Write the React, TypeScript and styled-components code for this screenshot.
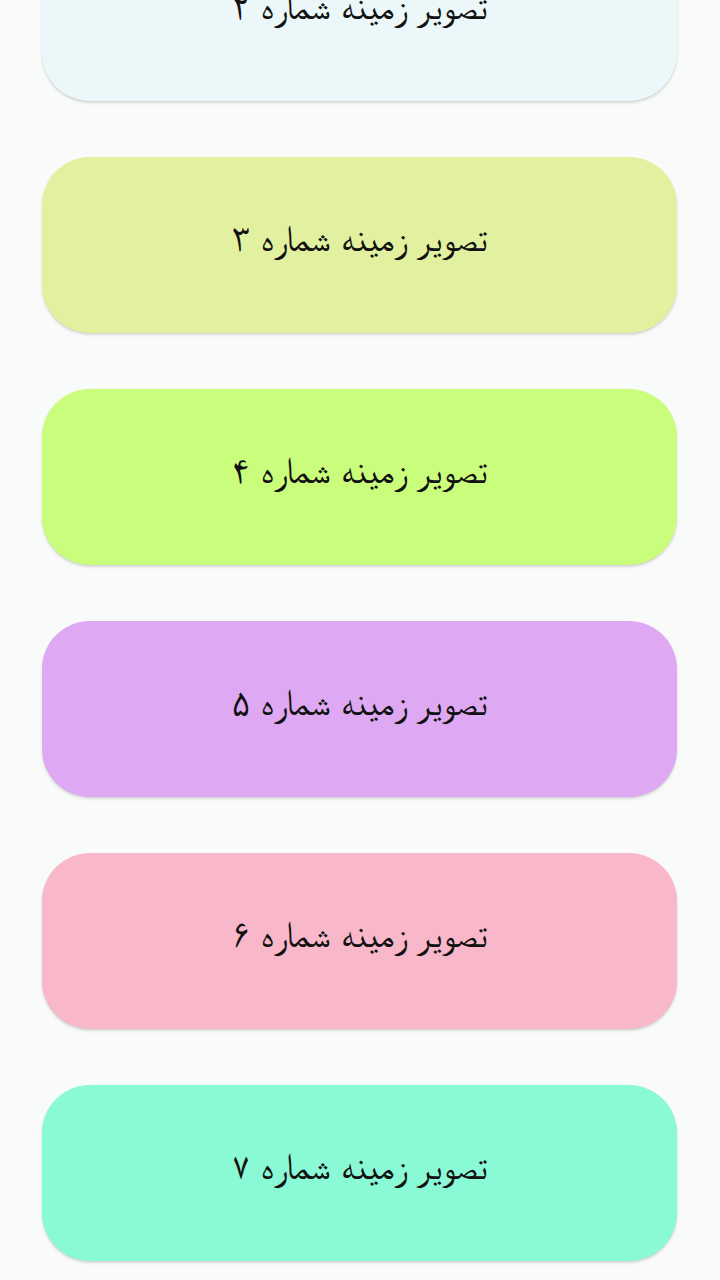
import React from "react";
import styled, { createGlobalStyle } from "styled-components";

const GlobalStyle = createGlobalStyle`
  html, body {
    margin: 0;
    padding: 0;
    background: #f9fbfb;
  }
  body {
    font-family: "FreeSerif", "Liberation Serif", serif;
    overflow: hidden;
  }
`;

const Screen = styled.div`
  width: 720px;
  height: 1280px;
  overflow: hidden;
  background: #f9fbfb;
`;

const List = styled.div`
  display: flex;
  flex-direction: column;
  gap: 56px;
  padding: 0 43px 0 42px;
  margin-top: -75px;
`;

const Card = styled.button<{ $bg: string }>`
  display: flex;
  align-items: center;
  justify-content: center;
  height: 176px;
  width: 100%;
  border: none;
  border-radius: 48px;
  background: ${(p) => p.$bg};
  box-shadow: 0 2px 3px rgba(0, 0, 0, 0.12), 0 1px 1px rgba(0, 0, 0, 0.06);
  cursor: pointer;
  padding: 0 0 12px;
`;

const Label = styled.span`
  direction: rtl;
  font-family: "FreeSerif", "Liberation Serif", serif;
  font-size: 37px;
  word-spacing: 2px;
  color: #111;
`;

const items = [
  { n: "۲", bg: "#ebf7f8" },
  { n: "۳", bg: "#e1f19f" },
  { n: "۴", bg: "#cbfd7d" },
  { n: "۵", bg: "#dfa8f3" },
  { n: "۶", bg: "#f8b8ca" },
  { n: "۷", bg: "#8af9d6" },
];

export default function App() {
  return (
    <Screen>
      <GlobalStyle />
      <List>
        {items.map((it) => (
          <Card key={it.n} $bg={it.bg}>
            <Label>تصویر زمینه شماره {it.n}</Label>
          </Card>
        ))}
      </List>
    </Screen>
  );
}
